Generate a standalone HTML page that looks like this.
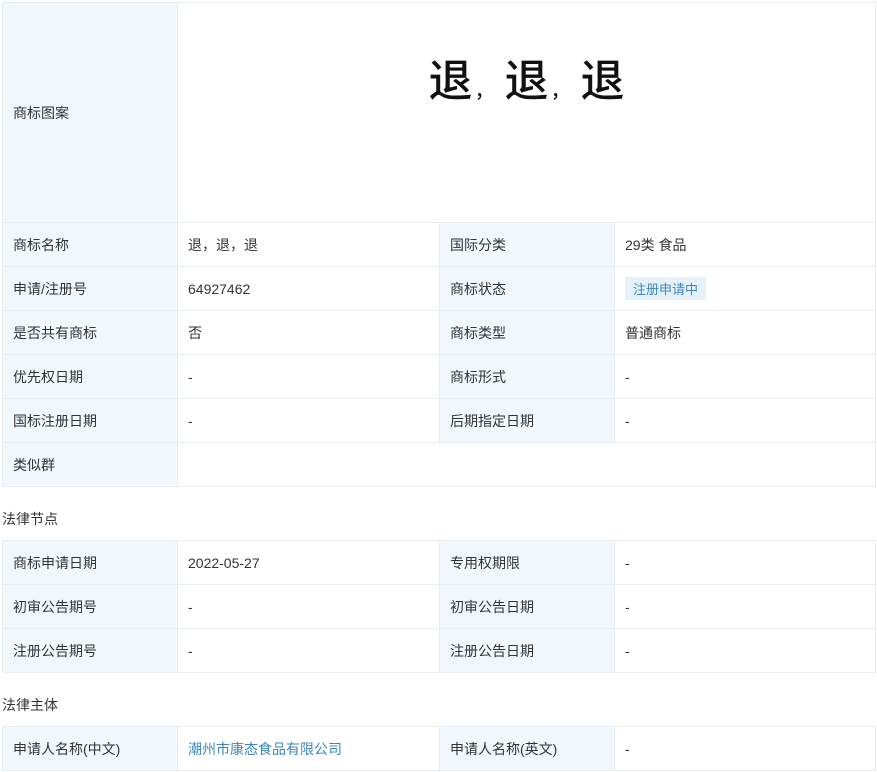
<!DOCTYPE html>
<html><head><meta charset="utf-8"><style>
body{margin:0;width:877px;height:772px;background:#fff;font-family:"Liberation Sans","Noto Sans CJK SC",sans-serif;font-size:14px;color:#333;position:relative;overflow:hidden}
.t{position:absolute;left:2px;width:873px;border-collapse:collapse;table-layout:fixed}
.t td{border:1px solid #e8edf1;height:44px;padding:0 0 0 10px;box-sizing:border-box;vertical-align:middle}
.t td.l{background:#f0f7fd}
.h{position:absolute;left:2px;font-size:14px;color:#333}
.tag{display:inline-block;background:#e6f2fb;color:#3a87c0;font-size:13px;padding:2px 8px}
a{color:#3a87c0;text-decoration:none}
.big{text-align:center;font-size:44px;font-weight:500;color:#111;margin-top:42px;font-family:'Noto Sans CJK SC',sans-serif}
.big span.c{font-size:20px;display:inline-block;width:14px;margin-right:18px}
</style></head><body>
<table class="t" style="top:2px">
<colgroup><col style="width:175px"><col style="width:262px"><col style="width:175px"><col style="width:261px"></colgroup>
<tr><td class="l" style="height:220px">商标图案</td><td colspan="3" style="height:220px;vertical-align:top;padding:0"><div class="big">退<span class="c">,</span>退<span class="c">,</span>退</div></td></tr>
<tr><td class="l">商标名称</td><td>退，退，退</td><td class="l">国际分类</td><td>29类 食品</td></tr>
<tr><td class="l">申请/注册号</td><td>64927462</td><td class="l">商标状态</td><td><span class="tag">注册申请中</span></td></tr>
<tr><td class="l">是否共有商标</td><td>否</td><td class="l">商标类型</td><td>普通商标</td></tr>
<tr><td class="l">优先权日期</td><td>-</td><td class="l">商标形式</td><td>-</td></tr>
<tr><td class="l">国标注册日期</td><td>-</td><td class="l">后期指定日期</td><td>-</td></tr>
<tr><td class="l">类似群</td><td colspan="3"></td></tr>
</table>
<div class="h" style="top:509px">法律节点</div>
<table class="t" style="top:540px">
<colgroup><col style="width:175px"><col style="width:262px"><col style="width:175px"><col style="width:261px"></colgroup>
<tr><td class="l">商标申请日期</td><td>2022-05-27</td><td class="l">专用权期限</td><td>-</td></tr>
<tr><td class="l">初审公告期号</td><td>-</td><td class="l">初审公告日期</td><td>-</td></tr>
<tr><td class="l">注册公告期号</td><td>-</td><td class="l">注册公告日期</td><td>-</td></tr>
</table>
<div class="h" style="top:695px">法律主体</div>
<table class="t" style="top:726px">
<colgroup><col style="width:175px"><col style="width:262px"><col style="width:175px"><col style="width:261px"></colgroup>
<tr><td class="l">申请人名称(中文)</td><td><a>潮州市康态食品有限公司</a></td><td class="l">申请人名称(英文)</td><td>-</td></tr>
</table>
</body></html>
